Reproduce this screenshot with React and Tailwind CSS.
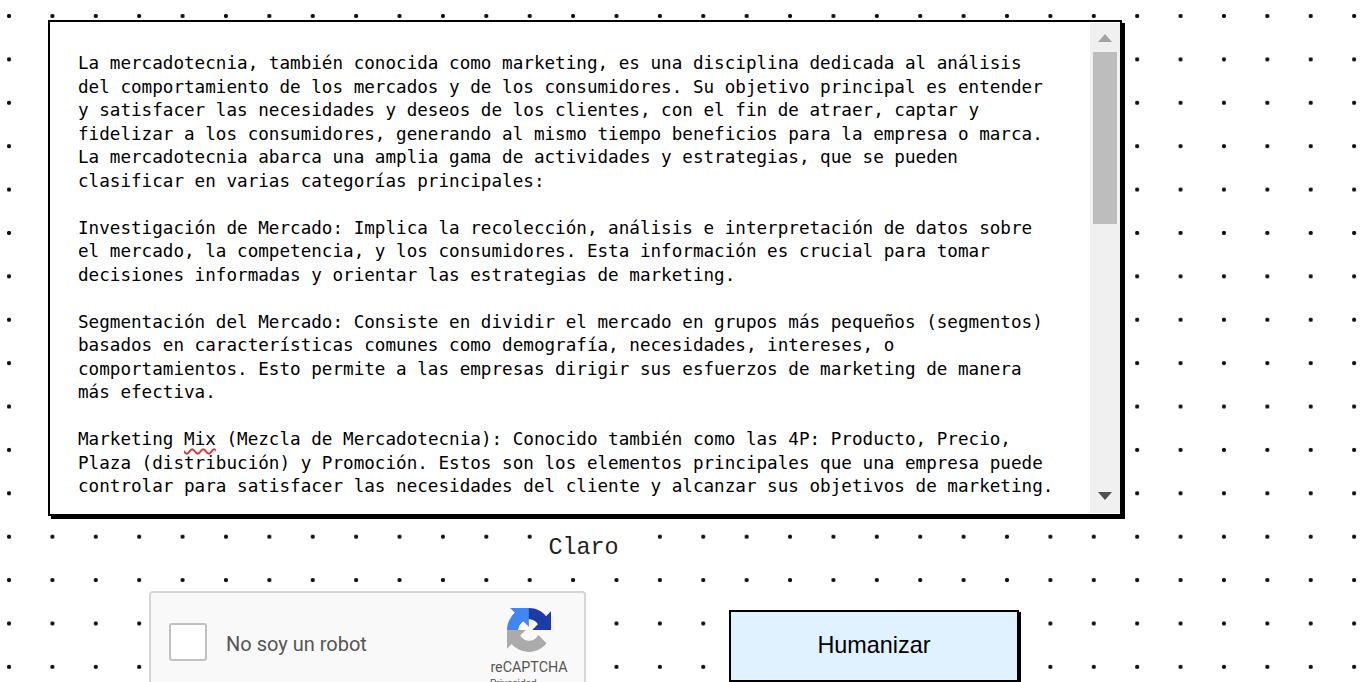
const lines = [
  'La mercadotecnia, también conocida como marketing, es una disciplina dedicada al análisis',
  'del comportamiento de los mercados y de los consumidores. Su objetivo principal es entender',
  'y satisfacer las necesidades y deseos de los clientes, con el fin de atraer, captar y',
  'fidelizar a los consumidores, generando al mismo tiempo beneficios para la empresa o marca.',
  'La mercadotecnia abarca una amplia gama de actividades y estrategias, que se pueden',
  'clasificar en varias categorías principales:',
  '',
  'Investigación de Mercado: Implica la recolección, análisis e interpretación de datos sobre',
  'el mercado, la competencia, y los consumidores. Esta información es crucial para tomar',
  'decisiones informadas y orientar las estrategias de marketing.',
  '',
  'Segmentación del Mercado: Consiste en dividir el mercado en grupos más pequeños (segmentos)',
  'basados en características comunes como demografía, necesidades, intereses, o',
  'comportamientos. Esto permite a las empresas dirigir sus esfuerzos de marketing de manera',
  'más efectiva.',
  '',
];

function RecaptchaLogo() {
  return (
    <svg viewBox="0 0 64 64" className="w-[44px] h-[44px]">
      <path
        d="M64 31.955l-.033-1.37V4.687l-7.16 7.16C50.948 4.674 42.033.093 32.05.093c-10.4 0-19.622 4.958-25.45 12.633l11.735 11.86a15.55 15.55 0 0 1 4.75-5.333c2.05-1.6 4.952-2.91 8.963-2.91.485 0 .86.057 1.135.163 4.97.393 9.28 3.135 11.815 7.13l-8.306 8.306c10.52-.04 22.4-.066 27.295.005"
        fill="#1c3aa9"
      />
      <path
        d="M31.862.094l-1.37.033H4.594l7.16 7.16C4.58 13.147 0 22.06 0 32.046c0 10.4 4.96 19.622 12.634 25.45l11.86-11.735a15.55 15.55 0 0 1-5.333-4.75c-1.6-2.05-2.91-4.952-2.91-8.963 0-.485.057-.86.163-1.135.393-4.97 3.135-9.28 7.13-11.815l8.306 8.306c-.04-10.52-.066-22.4.005-27.295"
        fill="#4285f4"
      />
      <path
        d="M.001 32.045l.033 1.37v25.898l7.16-7.16c5.86 7.173 14.774 11.754 24.76 11.754 10.4 0 19.622-4.958 25.45-12.633l-11.735-11.86a15.55 15.55 0 0 1-4.75 5.333c-2.05 1.6-4.952 2.91-8.963 2.91-.485 0-.86-.057-1.135-.163-4.97-.393-9.28-3.135-11.815-7.13l8.306-8.306c-10.52.04-22.4.066-27.295-.005"
        fill="#ababab"
      />
    </svg>
  );
}

function Scrollbar() {
  return (
    <div className="w-[30px] my-[1px] bg-[#f0f0f0] flex flex-col items-center">
      <div className="mt-[11px] w-0 h-0 border-x-[7px] border-x-transparent border-b-[8px] border-b-[#a3a3a3]" />
      <div className="mt-[10px] w-[24px] h-[172px] bg-[#bdbdbd]" />
      <div className="mt-auto mb-[13px] w-0 h-0 border-x-[7px] border-x-transparent border-t-[8px] border-t-[#505050]" />
    </div>
  );
}

function App() {
  return (
    <div className="h-screen overflow-hidden bg-white bg-[radial-gradient(circle,#111111_1.8px,transparent_2.4px)] bg-[size:43.4px_43.4px] bg-[position:-12.7px_-5.7px]">
      <div className="w-[1074px] ml-[48px] pt-[20px]">
        <div className="h-[496px] flex bg-white border-2 border-black shadow-[3px_3px_0_#000] overflow-hidden">
          <div className="flex-1 overflow-hidden pl-[28px] pt-[30px] text-[17.62px] leading-[23.5px] text-black font-['DejaVu_Sans_Mono',monospace] whitespace-pre">
            {lines.map((line, i) => (
              <div key={i} className="h-[23.5px]">{line}</div>
            ))}
            <div className="h-[23.5px]">
              Marketing <span className="underline decoration-wavy decoration-[#d33] decoration-[1.5px] underline-offset-[3px]">Mix</span> (Mezcla de Mercadotecnia): Conocido también como las 4P: Producto, Precio,
            </div>
            <div className="h-[23.5px]">Plaza (distribución) y Promoción. Estos son los elementos principales que una empresa puede</div>
            <div className="h-[23.5px]">controlar para satisfacer las necesidades del cliente y alcanzar sus objetivos de marketing.</div>
          </div>
          <Scrollbar />
        </div>

        <div className="flex justify-center mt-[18px] pr-[3px]">
          <span className="bg-white px-[2px] text-[23.4px] leading-[28px] text-[#222] font-['Liberation_Mono',monospace]">
            Claro
          </span>
        </div>

        <div className="flex items-start ml-[101px] mt-[29px]">
          <div className="w-[437px] h-[120px] shrink-0 flex bg-[#f9f9f9] border-2 border-[#d6d6d6] rounded-[4px]">
            <div className="ml-[18px] mt-[30px] w-[38px] h-[38px] bg-white border-2 border-[#c1c1c1] rounded-[3px]" />
            <span className="ml-[19px] mt-[39px] text-[20px] leading-[24px] text-[#555] font-['Roboto',sans-serif]">
              No soy un robot
            </span>
            <div className="ml-auto mr-[16px] mt-[15px] w-[78px] flex flex-col items-center">
              <RecaptchaLogo />
              <span className="mt-[7px] text-[14.3px] leading-[17px] text-[#555] whitespace-nowrap font-['Roboto',sans-serif]">reCAPTCHA</span>
              <span className="self-start mt-[2px] text-[10px] leading-[12px] text-[#555] font-['Roboto',sans-serif]">Privacidad</span>
            </div>
          </div>
          <button className="ml-[143px] mt-[19px] w-[290px] h-[72px] shrink-0 bg-[#e0f1ff] border-2 border-black shadow-[2px_2px_0_#000] text-[23.4px] text-black font-['Liberation_Sans',sans-serif]">
            Humanizar
          </button>
        </div>
      </div>
    </div>
  );
}

export default App;
